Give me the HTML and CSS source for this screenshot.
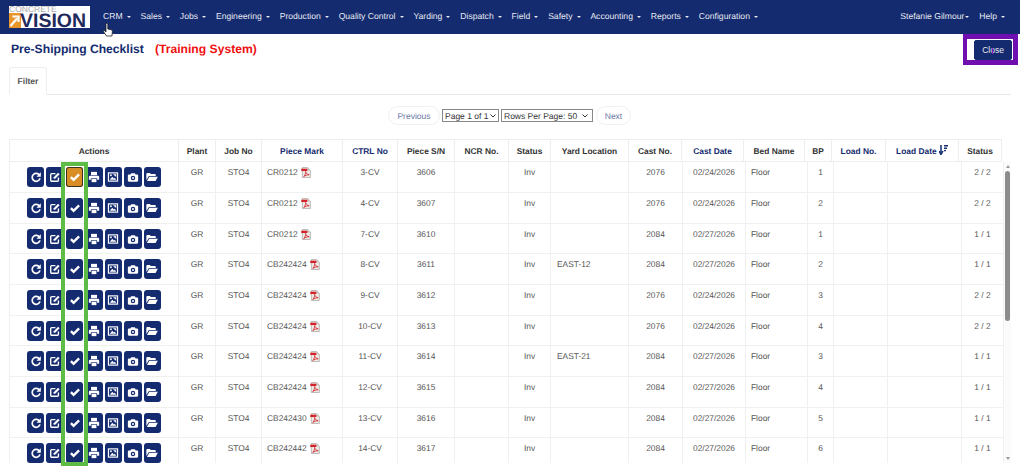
FILE: index.html
```html
<!DOCTYPE html>
<html lang="en">
<head>
<meta charset="utf-8">
<title>Pre-Shipping Checklist</title>
<link rel="stylesheet" href="styles.css">
</head>
<body>
<svg class="sprites" width="0" height="0" aria-hidden="true">
  <symbol id="i-redo" viewBox="0 0 14 14"><path d="M11.2 5.2A4.6 4.6 0 1 0 11.6 8.6" fill="none" stroke="#fff" stroke-width="2"/><path d="M12.6 1.4V6.6H7.6Z" fill="#fff"/></symbol>
  <symbol id="i-edit" viewBox="0 0 14 14"><path d="M7.5 3H3.2A1.2 1.2 0 0 0 2 4.2v6.6A1.2 1.2 0 0 0 3.2 12h6.6A1.2 1.2 0 0 0 11 10.8V7.5" fill="none" stroke="#fff" stroke-width="1.6"/><path d="M5.5 7.2 10.6 2l1.8 1.8L7.2 9H5.500Z" fill="#fff"/></symbol>
  <symbol id="i-check" viewBox="0 0 14 14"><path d="M2.2 7.2 5.4 10.4 11.800 4" fill="none" stroke="#fff" stroke-width="2.800"/></symbol>
  <symbol id="i-print" viewBox="0 0 14 14"><path d="M3.500 1h7v3.900h-7Z" fill="#fff"/><path d="M2.200 5.600h9.600a1.200 1.200 0 0 1 1.200 1.200v3.400h-2.400V8.400H3.400v1.800H1V6.800a1.200 1.200 0 0 1 1.200-1.200Z" fill="#fff"/><path d="M4.200 9.200h5.600v3.800H4.200Z" fill="#fff"/></symbol>
  <symbol id="i-image" viewBox="0 0 14 14"><path d="M1 1.500h12v11H1Z" fill="#fff"/><path d="M2.400 2.900h9.200v8.200H2.400Z" fill="#142b6f"/><path d="M7 3.800h3.800V7Z" fill="#fff"/><path d="M3.200 10.200 6.200 6.800l1.800 2 1.200-1 1.600 2.400Z" fill="#fff"/><circle cx="4.600" cy="5" r="1.100" fill="#fff"/></symbol>
  <symbol id="i-camera" viewBox="0 0 14 14"><path d="M4.800 2.500h4.400l.8 1.500h1.800A1.200 1.200 0 0 1 13 5.200v6A1.200 1.200 0 0 1 11.800 12.400H2.200A1.200 1.200 0 0 1 1 11.200V5.200A1.200 1.200 0 0 1 2.200 4H4Z" fill="#fff"/><circle cx="7" cy="8.200" r="2.600" fill="#142b6f"/><circle cx="7" cy="8.200" r="1.200" fill="#fff"/></symbol>
  <symbol id="i-folder" viewBox="0 0 14 14"><path d="M.4 3.400A1.200 1.200 0 0 1 1.600 2.200h3l1 1.200h4.800a1 1 0 0 1 1 1v1.300H3.400L.4 10.400Z" fill="#fff"/><path d="M3.900 6.800h9.900L11.200 11.800H1.100Z" fill="#fff"/></symbol>
  <symbol id="i-pdf" viewBox="0 0 11 12"><path d="M1.500.5h5.800l3 3V11.500h-8.800Z" fill="#eeeae6" stroke="#a9a5a2" stroke-width=".8"/><path d="M7 .6V3.700h3.200Z" fill="#c9c5c2"/><path d="M.3 1.800h6.700V4.400H.3Z" fill="#d2232a"/><path d="M3 10.400C4.700 8.700 5.300 6.400 5 4.900 5.700 6.900 6.800 8.300 9 8.500 6.800 8.500 4.800 9.200 3 10.400Z" fill="none" stroke="#d2232a" stroke-width=".9"/></symbol>
</svg>

<header class="navbar">
  <div class="logo">
    <span class="logo-top">CONCRETE</span>
    <span class="logo-arrow"><svg width="12" height="15" viewBox="0 0 12 15"><path d="M0 0H12V15H0Z" fill="#e8952b"/><path d="M1.500 13 8 5.500M3.500 3.500H9.500V9" fill="none" stroke="#fff" stroke-width="2.200"/></svg></span>
    <span class="logo-main">VISION</span>
  </div>
  <nav class="nav-main">
    <a class="nav-link">CRM<i class="caret"></i></a>
    <a class="nav-link">Sales<i class="caret"></i></a>
    <a class="nav-link">Jobs<i class="caret"></i></a>
    <a class="nav-link">Engineering<i class="caret"></i></a>
    <a class="nav-link">Production<i class="caret"></i></a>
    <a class="nav-link">Quality Control<i class="caret"></i></a>
    <a class="nav-link">Yarding<i class="caret"></i></a>
    <a class="nav-link">Dispatch<i class="caret"></i></a>
    <a class="nav-link">Field<i class="caret"></i></a>
    <a class="nav-link">Safety<i class="caret"></i></a>
    <a class="nav-link">Accounting<i class="caret"></i></a>
    <a class="nav-link">Reports<i class="caret"></i></a>
    <a class="nav-link">Configuration<i class="caret"></i></a>
  </nav>
  <nav class="nav-user">
    <a class="nav-link tight">Stefanie Gilmour<i class="caret"></i></a>
    <a class="nav-link">Help<i class="caret"></i></a>
  </nav>
</header>

<main class="page">
  <div class="title-row">
    <h1 class="title">Pre-Shipping Checklist<span class="training">(Training System)</span></h1>
    <button class="close-btn">Close</button>
  </div>
  <div class="tabs"><a class="tab">Filter</a></div>

  <div class="pager">
    <a class="pager-link prev">Previous</a>
    <span class="select-wrap page-sel"><select class="pager-select"><option>Page 1 of 1</option></select><svg class="chev" width="6" height="4" viewBox="0 0 6 4"><path d="M.5.5 3 3 5.500.5" fill="none" stroke="#333" stroke-width="1"/></svg></span>
    <span class="select-wrap rows-sel"><select class="pager-select"><option>Rows Per Page: 50</option></select><svg class="chev" width="6" height="4" viewBox="0 0 6 4"><path d="M.5.5 3 3 5.500.5" fill="none" stroke="#333" stroke-width="1"/></svg></span>
    <a class="pager-link next">Next</a>
  </div>

  <table class="grid head-grid">
    <colgroup>
      <col class="h1"><col class="h2"><col class="h3"><col class="h4"><col class="h5"><col class="h6"><col class="h7"><col class="h8"><col class="h9"><col class="h10"><col class="h11"><col class="h12"><col class="h13"><col class="h14"><col class="h15"><col class="h16">
    </colgroup>
    <thead>
      <tr>
        <th>Actions</th><th>Plant</th><th>Job No</th><th class="sort">Piece Mark</th><th class="sort">CTRL No</th><th>Piece S/N</th><th>NCR No.</th><th>Status</th><th>Yard Location</th><th>Cast No.</th><th class="sort">Cast Date</th><th>Bed Name</th><th>BP</th><th class="sort">Load No.</th>
        <th class="sort">Load Date <svg class="sort-icon" width="9" height="10" viewBox="0 0 9 10"><path d="M2 0V7.500M0 6 2 9.500 4 6" fill="none" stroke="#142b6f" stroke-width="1.500"/><path d="M5 .8H9M5 3.200H8M5 5.600H7" stroke="#142b6f" stroke-width="1.400"/></svg></th>
        <th>Status</th>
      </tr>
    </thead>
  </table>

  <div class="body-wrap">
    <table class="grid body-grid">
      <colgroup>
        <col class="b1"><col class="b2"><col class="b3"><col class="b4"><col class="b5"><col class="b6"><col class="b7"><col class="b8"><col class="b9"><col class="b10"><col class="b11"><col class="b12"><col class="b13"><col class="b14"><col class="b15"><col class="b16">
      </colgroup>
      <tbody>
        <tr><td class="actions"><div class="act-row"><span class="act"><svg width="12" height="12"><use href="#i-redo"/></svg></span><span class="act"><svg width="12" height="12"><use href="#i-edit"/></svg></span><span class="act act-on"><svg width="12" height="12"><use href="#i-check"/></svg></span><span class="act"><svg width="12" height="12"><use href="#i-print"/></svg></span><span class="act"><svg width="12" height="12"><use href="#i-image"/></svg></span><span class="act"><svg width="12" height="12"><use href="#i-camera"/></svg></span><span class="act"><svg width="12" height="12"><use href="#i-folder"/></svg></span></div></td><td>GR</td><td>STO4</td><td class="left">CR0212<svg class="pdf" width="10" height="11"><use href="#i-pdf"/></svg></td><td>3-CV</td><td>3606</td><td></td><td>Inv</td><td class="left yard"></td><td>2076</td><td>02/24/2026</td><td class="left">Floor</td><td>1</td><td></td><td></td><td>2 / 2</td></tr>
        <tr><td class="actions"><div class="act-row"><span class="act"><svg width="12" height="12"><use href="#i-redo"/></svg></span><span class="act"><svg width="12" height="12"><use href="#i-edit"/></svg></span><span class="act"><svg width="12" height="12"><use href="#i-check"/></svg></span><span class="act"><svg width="12" height="12"><use href="#i-print"/></svg></span><span class="act"><svg width="12" height="12"><use href="#i-image"/></svg></span><span class="act"><svg width="12" height="12"><use href="#i-camera"/></svg></span><span class="act"><svg width="12" height="12"><use href="#i-folder"/></svg></span></div></td><td>GR</td><td>STO4</td><td class="left">CR0212<svg class="pdf" width="10" height="11"><use href="#i-pdf"/></svg></td><td>4-CV</td><td>3607</td><td></td><td>Inv</td><td class="left yard"></td><td>2076</td><td>02/24/2026</td><td class="left">Floor</td><td>2</td><td></td><td></td><td>2 / 2</td></tr>
        <tr><td class="actions"><div class="act-row"><span class="act"><svg width="12" height="12"><use href="#i-redo"/></svg></span><span class="act"><svg width="12" height="12"><use href="#i-edit"/></svg></span><span class="act"><svg width="12" height="12"><use href="#i-check"/></svg></span><span class="act"><svg width="12" height="12"><use href="#i-print"/></svg></span><span class="act"><svg width="12" height="12"><use href="#i-image"/></svg></span><span class="act"><svg width="12" height="12"><use href="#i-camera"/></svg></span><span class="act"><svg width="12" height="12"><use href="#i-folder"/></svg></span></div></td><td>GR</td><td>STO4</td><td class="left">CR0212<svg class="pdf" width="10" height="11"><use href="#i-pdf"/></svg></td><td>7-CV</td><td>3610</td><td></td><td>Inv</td><td class="left yard"></td><td>2084</td><td>02/27/2026</td><td class="left">Floor</td><td>1</td><td></td><td></td><td>1 / 1</td></tr>
        <tr><td class="actions"><div class="act-row"><span class="act"><svg width="12" height="12"><use href="#i-redo"/></svg></span><span class="act"><svg width="12" height="12"><use href="#i-edit"/></svg></span><span class="act"><svg width="12" height="12"><use href="#i-check"/></svg></span><span class="act"><svg width="12" height="12"><use href="#i-print"/></svg></span><span class="act"><svg width="12" height="12"><use href="#i-image"/></svg></span><span class="act"><svg width="12" height="12"><use href="#i-camera"/></svg></span><span class="act"><svg width="12" height="12"><use href="#i-folder"/></svg></span></div></td><td>GR</td><td>STO4</td><td class="left">CB242424<svg class="pdf" width="10" height="11"><use href="#i-pdf"/></svg></td><td>8-CV</td><td>3611</td><td></td><td>Inv</td><td class="left yard">EAST-12</td><td>2084</td><td>02/27/2026</td><td class="left">Floor</td><td>2</td><td></td><td></td><td>1 / 1</td></tr>
        <tr><td class="actions"><div class="act-row"><span class="act"><svg width="12" height="12"><use href="#i-redo"/></svg></span><span class="act"><svg width="12" height="12"><use href="#i-edit"/></svg></span><span class="act"><svg width="12" height="12"><use href="#i-check"/></svg></span><span class="act"><svg width="12" height="12"><use href="#i-print"/></svg></span><span class="act"><svg width="12" height="12"><use href="#i-image"/></svg></span><span class="act"><svg width="12" height="12"><use href="#i-camera"/></svg></span><span class="act"><svg width="12" height="12"><use href="#i-folder"/></svg></span></div></td><td>GR</td><td>STO4</td><td class="left">CB242424<svg class="pdf" width="10" height="11"><use href="#i-pdf"/></svg></td><td>9-CV</td><td>3612</td><td></td><td>Inv</td><td class="left yard"></td><td>2076</td><td>02/24/2026</td><td class="left">Floor</td><td>3</td><td></td><td></td><td>2 / 2</td></tr>
        <tr><td class="actions"><div class="act-row"><span class="act"><svg width="12" height="12"><use href="#i-redo"/></svg></span><span class="act"><svg width="12" height="12"><use href="#i-edit"/></svg></span><span class="act"><svg width="12" height="12"><use href="#i-check"/></svg></span><span class="act"><svg width="12" height="12"><use href="#i-print"/></svg></span><span class="act"><svg width="12" height="12"><use href="#i-image"/></svg></span><span class="act"><svg width="12" height="12"><use href="#i-camera"/></svg></span><span class="act"><svg width="12" height="12"><use href="#i-folder"/></svg></span></div></td><td>GR</td><td>STO4</td><td class="left">CB242424<svg class="pdf" width="10" height="11"><use href="#i-pdf"/></svg></td><td>10-CV</td><td>3613</td><td></td><td>Inv</td><td class="left yard"></td><td>2076</td><td>02/24/2026</td><td class="left">Floor</td><td>4</td><td></td><td></td><td>2 / 2</td></tr>
        <tr><td class="actions"><div class="act-row"><span class="act"><svg width="12" height="12"><use href="#i-redo"/></svg></span><span class="act"><svg width="12" height="12"><use href="#i-edit"/></svg></span><span class="act"><svg width="12" height="12"><use href="#i-check"/></svg></span><span class="act"><svg width="12" height="12"><use href="#i-print"/></svg></span><span class="act"><svg width="12" height="12"><use href="#i-image"/></svg></span><span class="act"><svg width="12" height="12"><use href="#i-camera"/></svg></span><span class="act"><svg width="12" height="12"><use href="#i-folder"/></svg></span></div></td><td>GR</td><td>STO4</td><td class="left">CB242424<svg class="pdf" width="10" height="11"><use href="#i-pdf"/></svg></td><td>11-CV</td><td>3614</td><td></td><td>Inv</td><td class="left yard">EAST-21</td><td>2084</td><td>02/27/2026</td><td class="left">Floor</td><td>3</td><td></td><td></td><td>1 / 1</td></tr>
        <tr><td class="actions"><div class="act-row"><span class="act"><svg width="12" height="12"><use href="#i-redo"/></svg></span><span class="act"><svg width="12" height="12"><use href="#i-edit"/></svg></span><span class="act"><svg width="12" height="12"><use href="#i-check"/></svg></span><span class="act"><svg width="12" height="12"><use href="#i-print"/></svg></span><span class="act"><svg width="12" height="12"><use href="#i-image"/></svg></span><span class="act"><svg width="12" height="12"><use href="#i-camera"/></svg></span><span class="act"><svg width="12" height="12"><use href="#i-folder"/></svg></span></div></td><td>GR</td><td>STO4</td><td class="left">CB242424<svg class="pdf" width="10" height="11"><use href="#i-pdf"/></svg></td><td>12-CV</td><td>3615</td><td></td><td>Inv</td><td class="left yard"></td><td>2084</td><td>02/27/2026</td><td class="left">Floor</td><td>4</td><td></td><td></td><td>1 / 1</td></tr>
        <tr><td class="actions"><div class="act-row"><span class="act"><svg width="12" height="12"><use href="#i-redo"/></svg></span><span class="act"><svg width="12" height="12"><use href="#i-edit"/></svg></span><span class="act"><svg width="12" height="12"><use href="#i-check"/></svg></span><span class="act"><svg width="12" height="12"><use href="#i-print"/></svg></span><span class="act"><svg width="12" height="12"><use href="#i-image"/></svg></span><span class="act"><svg width="12" height="12"><use href="#i-camera"/></svg></span><span class="act"><svg width="12" height="12"><use href="#i-folder"/></svg></span></div></td><td>GR</td><td>STO4</td><td class="left">CB242430<svg class="pdf" width="10" height="11"><use href="#i-pdf"/></svg></td><td>13-CV</td><td>3616</td><td></td><td>Inv</td><td class="left yard"></td><td>2084</td><td>02/27/2026</td><td class="left">Floor</td><td>5</td><td></td><td></td><td>1 / 1</td></tr>
        <tr><td class="actions"><div class="act-row"><span class="act"><svg width="12" height="12"><use href="#i-redo"/></svg></span><span class="act"><svg width="12" height="12"><use href="#i-edit"/></svg></span><span class="act"><svg width="12" height="12"><use href="#i-check"/></svg></span><span class="act"><svg width="12" height="12"><use href="#i-print"/></svg></span><span class="act"><svg width="12" height="12"><use href="#i-image"/></svg></span><span class="act"><svg width="12" height="12"><use href="#i-camera"/></svg></span><span class="act"><svg width="12" height="12"><use href="#i-folder"/></svg></span></div></td><td>GR</td><td>STO4</td><td class="left">CB242442<svg class="pdf" width="10" height="11"><use href="#i-pdf"/></svg></td><td>14-CV</td><td>3617</td><td></td><td>Inv</td><td class="left yard"></td><td>2084</td><td>02/27/2026</td><td class="left">Floor</td><td>6</td><td></td><td></td><td>1 / 1</td></tr>
      </tbody>
    </table>
    <div class="scrollbar"><span class="arrow-up"></span><span class="thumb"></span><span class="arrow-down"></span></div>
  </div>
</main>

<div class="mark-green"></div>
<div class="mark-purple"></div>
<svg class="cursor-hand" width="10" height="14" viewBox="0 0 10 14"><path d="M3 1.200a.9.900 0 0 1 1.800 0V6l3.400.8c.8.200 1.200.800 1.200 1.500L9 13H3.500L.6 8.800c-.5-.8.500-1.600 1.200-.9L3 9Z" fill="#fff" stroke="#222" stroke-width=".8"/></svg>
<span class="cursor-beam"></span>
</body>
</html>
```

FILE: styles.css
```css
* { box-sizing: border-box; }
html, body { margin: 0; height: 473px; overflow: hidden; background: #fff; }
body { font-family: "Liberation Sans", Arial, sans-serif; font-size: 8.5px; color: #555; position: relative; text-rendering: geometricPrecision; }
.sprites { position: absolute; }

.navbar { height: 34px; background: #142b6f; display: flex; align-items: center; padding: 0 0 0 9px; }
.logo { width: 81px; height: 22px; background: #fff; position: relative; flex: none; }
.logo-top { position: absolute; left: 0; top: 0; font-size: 8.5px; line-height: 7px; color: #a8a8a8; }
.logo-arrow { position: absolute; left: 0; top: 7px; line-height: 0; }
.logo-main { position: absolute; left: 11px; top: 8px; font-size: 19.5px; line-height: 14px; font-weight: 700; color: #1f2a5c; }
.nav-main { display: flex; margin-left: 13px; gap: 9.9px; margin-top: -2px; }
.nav-user { display: flex; margin-left: auto; gap: 10px; padding-right: 15px; margin-top: -2px; }
.nav-link { color: #e6e9f2; font-size: 8.6px; white-space: nowrap; display: flex; align-items: center; }
.caret { width: 0; height: 0; border: 2.5px solid transparent; border-top-color: #e6e9f2; border-bottom: 0; margin-left: 4px; margin-top: 1px; }
.tight .caret { margin-left: 1px; }

.page { padding: 0 0 0 9px; }
.title-row { display: flex; justify-content: space-between; align-items: flex-start; height: 33px; }
.title { margin: 8px 0 0 2px; font-size: 12.15px; line-height: 14px; color: #142b6f; font-weight: 700; }
.training { color: #f01010; margin-left: 11px; }
.close-btn { width: 38px; height: 20px; margin: 6px 8px 0 0; background: #142b6f; color: #e6e9f2; border: 1px solid #142b6f; border-radius: 2px; font: 8.5px "Liberation Sans", Arial, sans-serif; padding: 0; box-shadow: 0 0 0 1px #fff; }

.tabs { height: 28px; border-bottom: 1px solid #e8e8e8; margin-right: 9px; }
.tab { display: inline-flex; width: 38px; height: 28px; align-items: center; justify-content: center; font-weight: 700; color: #555; border: 1px solid #eee; border-bottom-color: #fff; border-radius: 3px 3px 0 0; background: #fff; }

.pager { height: 44px; display: flex; align-items: flex-start; justify-content: center; padding-top: 11px; gap: 2px; margin-right: 10px; }
.pager-link { height: 19px; display: flex; align-items: center; justify-content: center; border: 1px solid #f0f0f0; border-radius: 10px; color: #6b78a5; }
.prev { width: 52px; }
.next { width: 35px; margin-left: 1px; }
.select-wrap { position: relative; height: 13px; margin-top: 3px; display: block; }
.pager-select { appearance: none; width: 100%; height: 13px; display: block; font: 8.5px "Liberation Sans", Arial, sans-serif; color: #333; background: #fff; border: 1px solid #888; padding: 0 0 0 2px; border-radius: 0; text-rendering: geometricPrecision; }
.chev { position: absolute; top: 5px; right: 3px; }
.page-sel { width: 57px; }
.rows-sel { width: 92px; }
.rows-sel .chev { right: 5px; }

.grid { table-layout: fixed; }
.head-grid { width: 991px; border-collapse: collapse; }
.body-grid { width: 995px; border-collapse: separate; border-spacing: 0; }
.grid th { height: 22px; padding: 0; font-size: 8.4px; font-weight: 700; color: #333; text-align: center; border: 1px solid #eee; white-space: nowrap; }
.grid th.sort { color: #142b6f; }
.sort-icon { vertical-align: -1px; }
.grid td { height: 31px; padding: 5px 0 0; vertical-align: top; font-size: 8.4px; line-height: 11px; color: #555; text-align: center; border-right: 1px solid #f0f0f0; border-bottom: 1px solid #f0f0f0; white-space: nowrap; }
.grid td:first-child { border-left: 1px solid #f0f0f0; }
.grid tr:nth-child(3n) td { height: 30px; }
.grid td.left { text-align: left; padding-left: 5px; }
.grid td.yard { padding-left: 6px; }
.pdf { vertical-align: -3px; margin-left: 3px; }

.h1 { width: 169px; } .h2 { width: 37px; } .h3 { width: 46px; } .h4 { width: 81px; } .h5 { width: 55px; } .h6 { width: 57px; } .h7 { width: 54px; } .h8 { width: 42px; } .h9 { width: 78px; } .h10 { width: 53px; } .h11 { width: 62px; } .h12 { width: 61px; } .h13 { width: 27px; } .h14 { width: 54px; } .h15 { width: 73px; } .h16 { width: 43px; }
.b1 { width: 170px; } .b2 { width: 37px; } .b3 { width: 46px; } .b4 { width: 81px; } .b5 { width: 55px; } .b6 { width: 57px; } .b7 { width: 54px; } .b8 { width: 42px; } .b9 { width: 78px; } .b10 { width: 54px; } .b11 { width: 63px; } .b12 { width: 62px; } .b13 { width: 26px; } .b14 { width: 54px; } .b15 { width: 74px; } .b16 { width: 42px; }

.act-row { display: flex; justify-content: center; gap: 2.3px; }
.act { width: 17.2px; height: 20px; border-radius: 3px; background: #142b6f; display: flex; align-items: center; justify-content: center; }
.act-on { background: #d98e25; box-shadow: inset 0 0 0 1px #3a3020; }

.body-wrap { position: relative; height: 301px; overflow: hidden; }
.scrollbar { position: absolute; left: 995px; top: 0; bottom: 0; width: 7px; background: #fbfbfb; display: flex; flex-direction: column; align-items: center; }
.arrow-up { width: 0; height: 0; border: 2.5px solid transparent; border-bottom: 3px solid #9a9a9a; border-top: 0; margin-top: 3px; }
.thumb { width: 5px; height: 150px; background: #8c8c8c; border-radius: 3px; margin-top: 3px; }
.arrow-down { width: 0; height: 0; border: 2.5px solid transparent; border-top: 3px solid #9a9a9a; border-bottom: 0; margin-top: auto; margin-bottom: 3px; }

.mark-green { position: absolute; left: 61px; top: 162px; width: 27px; height: 304px; border: 4px solid #5dbb46; }
.mark-purple { position: absolute; left: 963px; top: 34px; width: 55px; height: 31px; border: 5px solid #6f0fb0; border-left-width: 4px; pointer-events: none; }
.cursor-hand { position: absolute; left: 103px; top: 23px; }
.cursor-beam { position: absolute; left: 992px; top: 48px; width: 1px; height: 6px; background: #8a10c0; }
```
